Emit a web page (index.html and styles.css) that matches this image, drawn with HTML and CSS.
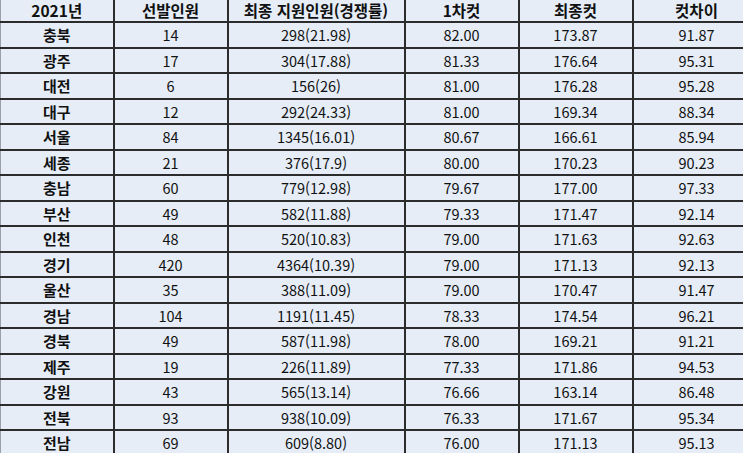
FILE: index.html
```html
<!DOCTYPE html>
<html lang="ko">
<head>
<meta charset="utf-8">
<link rel="stylesheet" href="styles.css">
</head>
<body>
<table class="cut-table">
  <colgroup>
    <col class="c1"><col class="c2"><col class="c3"><col class="c4"><col class="c5"><col class="c6">
  </colgroup>
  <thead>
    <tr><th>2021년</th><th>선발인원</th><th>최종 지원인원(경쟁률)</th><th>1차컷</th><th>최종컷</th><th>컷차이</th></tr>
  </thead>
  <tbody>
    <tr><th>충북</th><td>14</td><td>298(21.98)</td><td>82.00</td><td>173.87</td><td>91.87</td></tr>
    <tr><th>광주</th><td>17</td><td>304(17.88)</td><td>81.33</td><td>176.64</td><td>95.31</td></tr>
    <tr><th>대전</th><td>6</td><td>156(26)</td><td>81.00</td><td>176.28</td><td>95.28</td></tr>
    <tr><th>대구</th><td>12</td><td>292(24.33)</td><td>81.00</td><td>169.34</td><td>88.34</td></tr>
    <tr><th>서울</th><td>84</td><td>1345(16.01)</td><td>80.67</td><td>166.61</td><td>85.94</td></tr>
    <tr><th>세종</th><td>21</td><td>376(17.9)</td><td>80.00</td><td>170.23</td><td>90.23</td></tr>
    <tr><th>충남</th><td>60</td><td>779(12.98)</td><td>79.67</td><td>177.00</td><td>97.33</td></tr>
    <tr><th>부산</th><td>49</td><td>582(11.88)</td><td>79.33</td><td>171.47</td><td>92.14</td></tr>
    <tr><th>인천</th><td>48</td><td>520(10.83)</td><td>79.00</td><td>171.63</td><td>92.63</td></tr>
    <tr><th>경기</th><td>420</td><td>4364(10.39)</td><td>79.00</td><td>171.13</td><td>92.13</td></tr>
    <tr><th>울산</th><td>35</td><td>388(11.09)</td><td>79.00</td><td>170.47</td><td>91.47</td></tr>
    <tr><th>경남</th><td>104</td><td>1191(11.45)</td><td>78.33</td><td>174.54</td><td>96.21</td></tr>
    <tr><th>경북</th><td>49</td><td>587(11.98)</td><td>78.00</td><td>169.21</td><td>91.21</td></tr>
    <tr><th>제주</th><td>19</td><td>226(11.89)</td><td>77.33</td><td>171.86</td><td>94.53</td></tr>
    <tr><th>강원</th><td>43</td><td>565(13.14)</td><td>76.66</td><td>163.14</td><td>86.48</td></tr>
    <tr><th>전북</th><td>93</td><td>938(10.09)</td><td>76.33</td><td>171.67</td><td>95.34</td></tr>
    <tr><th>전남</th><td>69</td><td>609(8.80)</td><td>76.00</td><td>171.13</td><td>95.13</td></tr>
  </tbody>
</table>
</body>
</html>
```
FILE: styles.css
```css
html, body {
  margin: 0;
  padding: 0;
  background: #e6edf7;
}
body {
  font-family: "Noto Sans CJK KR", "Noto Sans", sans-serif;
  color: #111;
  overflow: hidden;
}
.cut-table {
  border-collapse: collapse;
  table-layout: fixed;
  width: 760px;
  background: #e6edf7;
  border-left: 1px solid #9aa0a8;
}
.c1 { width: 113px; }
.c2 { width: 114px; }
.c3 { width: 177px; }
.c4 { width: 114px; }
.c5 { width: 114px; }
.c6 { width: 128px; }
.cut-table th,
.cut-table td {
  text-align: center;
  padding: 0;
  border: 2px solid #2c2c2c;
  font-size: 14.5px;
  line-height: 17px;
  white-space: nowrap;
}
.cut-table thead th {
  border-top: none;
  height: 21px;
  font-weight: 700;
  font-size: 15.5px;
}
.cut-table tbody tr {
  height: 25.5px;
}
.cut-table tbody th {
  font-weight: 700;
  font-size: 15px;
}
.cut-table td {
  font-weight: 400;
}
.cut-table tr > :first-child {
  border-left: none;
}
```
